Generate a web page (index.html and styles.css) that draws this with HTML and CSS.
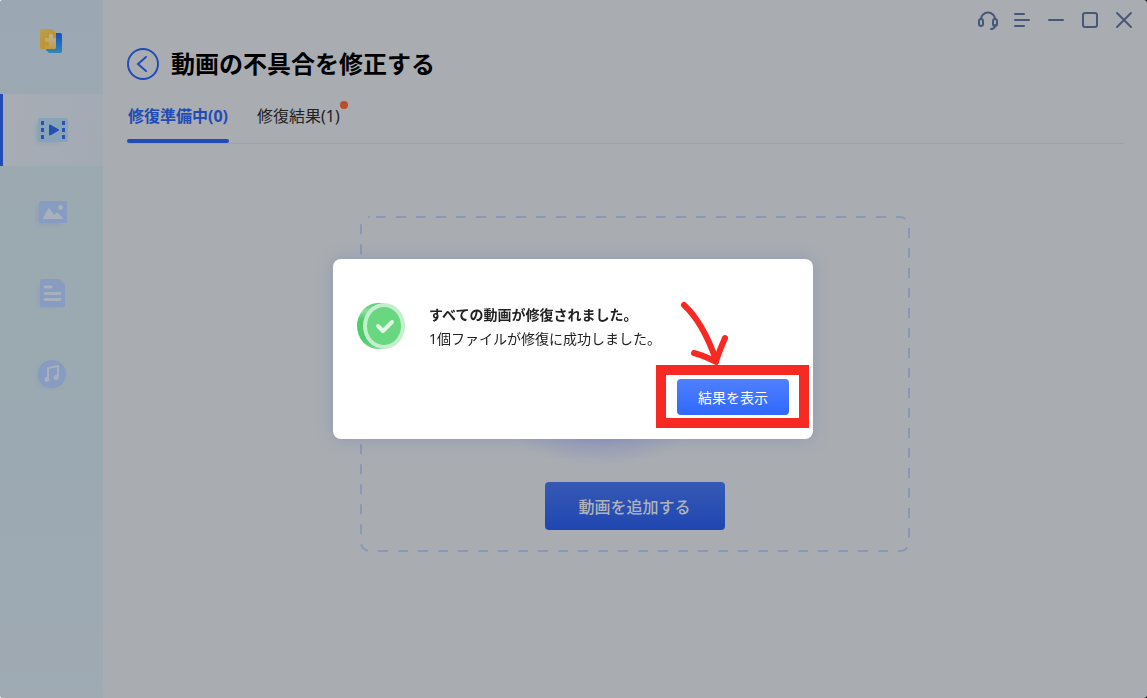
FILE: index.html
```html
<!DOCTYPE html>
<html lang="ja">
<head>
  <meta charset="UTF-8">
  <meta name="viewport" content="width=device-width, initial-scale=1.0">
  <title>動画の不具合を修正する</title>
  <link rel="stylesheet" href="styles.css">
</head>
<body>
  <div class="window">
    <nav class="sidebar">
      <div class="logo">
        <svg width="24" height="26" viewBox="0 0 24 26">
          <defs>
            <linearGradient id="logoBlue" x1="0" y1="0" x2="0" y2="1">
              <stop offset="0" stop-color="#1450c0"/><stop offset="1" stop-color="#3187ba"/>
            </linearGradient>
            <linearGradient id="logoGold" x1="0" y1="0" x2="1" y2="1">
              <stop offset="0" stop-color="#b8a050"/><stop offset="1" stop-color="#c48a18"/>
            </linearGradient>
            <linearGradient id="logoPiece" x1="0" y1="0" x2="0" y2="1">
              <stop offset="0" stop-color="#bdb496"/><stop offset="1" stop-color="#c09a45"/>
            </linearGradient>
          </defs>
          <path d="M9 5h12a2 2 0 0 1 2 2v16a2 2 0 0 1-2 2H10l-3-3V7a2 2 0 0 1 2-2z" fill="url(#logoBlue)"/>
          <path d="M3 1h10l4 4v14a2 2 0 0 1-2 2H3a2 2 0 0 1-2-2V3a2 2 0 0 1 2-2z" fill="url(#logoGold)"/>
          <path d="M6 10h4V8a2 2 0 1 1 4 0v2h3v9a2 2 0 0 1-2 2H6v-3h2a2 2 0 0 0 0-4H6z" fill="url(#logoPiece)"/>
        </svg>
      </div>
      <a href="#" class="nav-item active" aria-label="動画">
        <svg width="36" height="32" viewBox="0 0 36 32">
          <rect class="shade" x="2" y="9" width="24" height="20" rx="4" fill="#6f9cc2"/>
          <rect x="4" y="4" width="30" height="24" rx="2" fill="#86a3b8"/>
          <path d="M7 7h3v4H7zM7 14h3v4H7zM7 21h3v4H7zM28 7h3v4h-3zM28 14h3v4h-3zM28 21h3v4h-3z" fill="#2b52b0"/>
          <path d="M15 11.500v9a1 1 0 0 0 1.500.8l8-4.500a1 1 0 0 0 0-1.600l-8-4.500a1 1 0 0 0-1.500.8z" fill="#264fb5"/>
        </svg>
      </a>
      <a href="#" class="nav-item" aria-label="写真">
        <svg width="36" height="32" viewBox="0 0 36 32">
          <rect class="shade" x="3" y="10" width="24" height="19" rx="4" fill="#8499bd"/>
          <rect x="5" y="5" width="28" height="22" rx="2" fill="#889bc0"/>
          <path d="M9 22l5-9q1-1.500 2 0l4 6 2-2q1-1 2 0l5 5q0 1-1 1H10q-1 0-1-1z" fill="#a7b0bd"/>
          <circle cx="26.500" cy="11.500" r="2.500" fill="#a7b0bd"/>
        </svg>
      </a>
      <a href="#" class="nav-item" aria-label="ファイル">
        <svg width="36" height="32" viewBox="0 0 36 32">
          <rect class="shade" x="4" y="9" width="22" height="21" rx="4" fill="#8499bd"/>
          <path d="M8 2h17l6 6v20a2 2 0 0 1-2 2H8a2 2 0 0 1-2-2V4a2 2 0 0 1 2-2z" fill="#889bc0"/>
          <path d="M11 10h6M11 16.500h15M11 22.500h15" stroke="#a7b0bd" stroke-width="3" stroke-linecap="round"/>
        </svg>
      </a>
      <a href="#" class="nav-item" aria-label="音声">
        <svg width="36" height="32" viewBox="0 0 36 32">
          <circle class="shade" cx="15" cy="19" r="12" fill="#8499bd"/>
          <circle cx="18" cy="16" r="14" fill="#889bc0"/>
          <path d="M14 21V10l10-2v11" fill="none" stroke="#a7b0bd" stroke-width="2"/>
          <ellipse cx="13" cy="21.500" rx="2.500" ry="2.500" fill="#a7b0bd"/>
          <ellipse cx="22" cy="19.500" rx="2.500" ry="2.500" fill="#a7b0bd"/>
        </svg>
      </a>
    </nav>

    <main class="main">
      <div class="titlebar">
        <button type="button" aria-label="サポート">
          <svg width="22" height="20" viewBox="0 0 22 20">
            <path d="M4 9a7 6.500 0 0 1 14 0M18 15q0 4-4 4"/>
            <rect x="2" y="9" width="4" height="7" rx="2"/>
            <rect x="16" y="9" width="4" height="7" rx="2"/>
          </svg>
        </button>
        <button type="button" aria-label="メニュー">
          <svg width="18" height="18" viewBox="0 0 18 18"><path d="M2 3h9M2 9h14M2 15h9"/></svg>
        </button>
        <button type="button" aria-label="最小化">
          <svg width="18" height="18" viewBox="0 0 18 18"><path d="M2 9h14"/></svg>
        </button>
        <button type="button" aria-label="最大化">
          <svg width="18" height="18" viewBox="0 0 18 18"><rect x="2" y="2" width="14" height="14" rx="2"/></svg>
        </button>
        <button type="button" aria-label="閉じる">
          <svg width="18" height="18" viewBox="0 0 18 18"><path d="M2 2l14 14M16 2L2 16"/></svg>
        </button>
      </div>

      <div class="content">
        <header class="page-head">
          <button type="button" class="back" aria-label="戻る">
            <svg width="32" height="32" viewBox="0 0 32 32">
              <circle cx="16" cy="16" r="15"/>
              <path d="M19 9l-8 7 8 7"/>
            </svg>
          </button>
          <h1>動画の不具合を修正する</h1>
        </header>

        <div class="tabs">
          <button type="button" class="tab active">修復準備中(0)</button>
          <button type="button" class="tab">修復結果(1)<span class="dot"></span></button>
        </div>

        <div class="dropzone">
          <svg class="dashes" width="100%" height="100%">
            <rect x="1" y="1" rx="9" ry="9"/>
          </svg>
          <div class="glow"></div>
          <button type="button" class="btn add">動画を追加する</button>
        </div>
      </div>
    </main>
  </div>

  <div class="overlay">
    <div class="dialog" role="dialog" aria-labelledby="dialogTitle">
      <div class="dialog-body">
        <svg width="48" height="48" viewBox="0 0 48 48">
          <defs>
            <linearGradient id="coin" x1="0" y1="0" x2="0" y2="1">
              <stop offset="0" stop-color="#52cc6d"/><stop offset=".18" stop-color="#8be09d"/>
              <stop offset=".36" stop-color="#4fcb6b"/><stop offset=".8" stop-color="#4fcb6b"/>
              <stop offset="1" stop-color="#6fd786"/>
            </linearGradient>
          </defs>
          <path d="M21 0h6v46h-6a21 23 0 0 1 0-46z" fill="url(#coin)"/>
          <ellipse cx="27" cy="23" rx="21" ry="23" fill="#c3efcc"/>
          <ellipse cx="27" cy="23" rx="17" ry="19" fill="#69d680"/>
          <path d="M21 23l5 5 9-9" fill="none" stroke="#e1f9e5" stroke-width="4" stroke-linecap="round" stroke-linejoin="round"/>
        </svg>
        <div class="message">
          <h2 id="dialogTitle">すべての動画が修復されました。</h2>
          <p>1個ファイルが修復に成功しました。</p>
        </div>
      </div>
      <div class="dialog-foot">
        <div class="marked">
          <button type="button" class="btn show">結果を表示</button>
          <span class="mark-box"></span>
          <svg class="mark-arrow" width="52" height="68" viewBox="0 0 52 68">
            <path d="M6 6C19 18 30 38 38 61M16 54c7 2 15 5 22 9 2-8 6-17 9-24"/>
          </svg>
        </div>
      </div>
    </div>
  </div>
</body>
</html>
```

FILE: styles.css
```css
* {
  box-sizing: border-box;
}

html {
  background: linear-gradient(90deg, #fff, #000);
}

body {
  margin: 0;
  font-family: "Noto Sans", "Noto Sans CJK JP", sans-serif;
  font-size: 14px;
  color: #222;
}

h1, h2, p {
  margin: 0;
}

button {
  padding: 0;
  border: none;
  background: none;
  font-family: inherit;
  cursor: pointer;
}

svg {
  display: block;
}

.window {
  display: flex;
  min-height: 100vh;
  background: #a9adb2;
  border-radius: 3px;
  overflow: hidden;
}

/* sidebar */
.sidebar {
  width: 103px;
  flex-shrink: 0;
  display: flex;
  flex-direction: column;
  gap: 9px;
  background: linear-gradient(180deg, #9ba7b3 0, #9ca9b1 160px, #9ba9b2 420px, #9faab3);
}

.logo {
  height: 85px;
  padding-top: 28px;
  padding-left: 39px;
}

.nav-item {
  height: 72px;
  padding-top: 2px;
  display: flex;
  align-items: center;
  justify-content: center;
}

.nav-item.active {
  padding-top: 0;
  background: linear-gradient(100deg, #a7adb2, #a5abb6 70%, #a2aab3);
  box-shadow: inset 3px 0 #224bb5;
}

.shade {
  opacity: 0.5;
  filter: blur(2px);
}

/* main area */
.main {
  flex: 1;
  min-width: 0;
}

.titlebar {
  height: 40px;
  padding-right: 6px;
  display: flex;
  justify-content: flex-end;
}

.titlebar button {
  width: 34px;
  display: flex;
  align-items: center;
  justify-content: center;
}

.titlebar svg {
  fill: none;
  stroke: #485778;
  stroke-width: 2;
  stroke-linecap: round;
}

.content {
  padding: 8px 23px 0 24px;
}

.page-head {
  display: flex;
  align-items: center;
  gap: 12px;
}

.back svg {
  fill: none;
  stroke: #224bb5;
  stroke-width: 2;
  stroke-linecap: round;
}

h1 {
  font-size: 24px;
  line-height: 32px;
  color: #000;
}

.tabs {
  display: flex;
  gap: 28px;
  height: 40px;
  margin-top: 24px;
  border-bottom: 1px solid #9ba2b0;
}

.tab {
  position: relative;
  padding-bottom: 15px;
  font-size: 16px;
  line-height: 24px;
  color: #222;
}

.tab.active {
  min-width: 102px;
  font-weight: bold;
  color: #224bb5;
}

.tab.active::after {
  content: "";
  position: absolute;
  left: 0;
  right: 0;
  bottom: 0;
  height: 4px;
  border-radius: 2px;
  background: #224bb5;
}

.dot {
  position: absolute;
  top: -3px;
  right: -8px;
  width: 8px;
  height: 8px;
  border-radius: 50%;
  background: #bf4b2b;
}

.dropzone {
  position: relative;
  max-width: 550px;
  height: 336px;
  margin: 72px auto 0;
  padding-bottom: 22px;
  left: 9px;
  display: flex;
  flex-direction: column;
  align-items: center;
  justify-content: flex-end;
}

.dashes {
  position: absolute;
  inset: 0;
}

.dashes rect {
  width: calc(100% - 2px);
  height: calc(100% - 2px);
  fill: none;
  stroke: #8a97b8;
  stroke-width: 2;
  stroke-dasharray: 10 10;
  stroke-dashoffset: 14;
}

.glow {
  width: 180px;
  height: 80px;
  margin-right: 68px;
  margin-bottom: 16px;
  background: radial-gradient(closest-side, #858cbc, #9a9fb7 50%, #a9adb2);
}

.btn {
  border-radius: 4px;
  text-align: center;
}

.add {
  width: 180px;
  height: 48px;
  font-size: 16px;
  font-weight: 500;
  color: #b0b4ba;
  background: linear-gradient(180deg, #3659b5, #2047b1);
}

/* dialog */
.overlay {
  position: fixed;
  inset: 0;
  padding-right: 1px;
  display: flex;
  align-items: center;
  justify-content: center;
}

.dialog {
  width: 480px;
  padding: 44px 24px 24px;
  border-radius: 8px;
  background: #fff;
  box-shadow: 0 0 16px rgba(110, 125, 175, 0.4);
}

.dialog-body {
  display: flex;
  gap: 24px;
}

.message {
  line-height: 24px;
}

.message h2 {
  font-size: 14px;
}

.dialog-foot {
  display: flex;
  justify-content: flex-end;
  margin-top: 28px;
}

.marked {
  position: relative;
}

.show {
  display: block;
  width: 112px;
  height: 36px;
  font-size: 14px;
  color: #fff;
  background: linear-gradient(180deg, #4f80ff, #3068ff);
}

.mark-box {
  position: absolute;
  inset: -14px -20px -13px -21px;
  border: 10px solid #f62a22;
  pointer-events: none;
}

.mark-arrow {
  position: absolute;
  left: 1px;
  bottom: 48px;
  fill: none;
  stroke: #f62a22;
  stroke-width: 6;
  stroke-linecap: round;
  stroke-linejoin: round;
  pointer-events: none;
}
```
